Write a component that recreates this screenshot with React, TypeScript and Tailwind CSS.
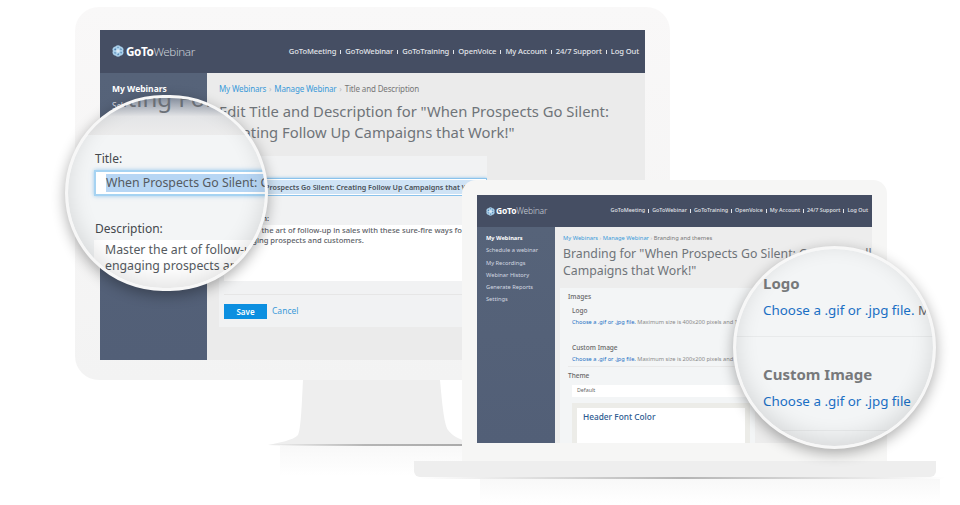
const sans = { fontFamily: '"Noto Sans", "Open Sans", sans-serif' };

const navLinks = ['GoToMeeting', 'GoToWebinar', 'GoToTraining', 'OpenVoice', 'My Account', '24/7 Support', 'Log Out'];
const laptopMenu = ['Schedule a webinar', 'My Recordings', 'Webinar History', 'Generate Reports', 'Settings'];

function LogoMark({ size }: { size: number }) {
  const lobes = [0, 60, 120, 180, 240, 300];
  return (
    <svg width={size} height={size} viewBox="0 0 24 24" className="shrink-0">
      {lobes.map((a) => (
        <g key={a} transform={`rotate(${a} 12 12)`}>
          <circle cx="12" cy="6" r="5.6" fill="#a9cfea" />
          <circle cx="12" cy="5.5" r="1.9" fill="#4f82b0" />
        </g>
      ))}
      <circle cx="12" cy="12" r="3.6" fill="#dbeaf6" />
    </svg>
  );
}

function Nav({ className, gap }: { className: string; gap: string }) {
  return (
    <div className={`flex items-center font-medium text-[#e2e5ea] ${className}`}>
      {navLinks.map((link, i) => (
        <span key={link} className="flex items-center">
          {i > 0 && <span className={`bg-[#e2e5ea] w-px h-[4px] ${gap}`} />}
          {link}
        </span>
      ))}
    </div>
  );
}

function Magnifier({ className, children }: { className: string; children: React.ReactNode }) {
  return (
    <div className={`absolute rounded-full overflow-hidden border-[3px] border-[#f7f7f7] bg-[#f3f5f6] shadow-[0_4px_14px_rgba(0,0,0,0.32)] ${className}`}>
      {children}
      <div className="absolute inset-0 rounded-full shadow-[inset_0_-6px_22px_rgba(0,0,0,0.12)]" />
    </div>
  );
}

function Monitor() {
  return (
    <div className="absolute left-[75px] top-[7px] w-[595px] h-[373px] rounded-[24px] bg-gradient-to-b from-[#f9f8f8] to-[#f3f3f3] pl-[25px] pt-[23px]">
      <div className="w-[545px] h-[330px] flex flex-col">
        <div className="h-[43px] bg-[#454e63] flex items-center justify-between pl-[12px] pr-[6px]">
          <div className="flex items-center gap-[2px]">
            <LogoMark size={12} />
            <span className="text-[11.7px] tracking-[-0.4px] font-bold text-white">GoTo<span className="font-light text-[#c9ced7]">Webinar</span></span>
          </div>
          <Nav className="text-[7.6px] tracking-[-0.1px] leading-none h-[10px]" gap="mx-[4px]" />
        </div>
        <div className="flex flex-1 min-h-0">
          <div className="w-[107px] shrink-0 bg-gradient-to-b from-[#566379] to-[#525f77] pl-[12px] pt-[10px] text-[8.5px] leading-[11px]">
            <div className="font-bold text-white">My Webinars</div>
            <div className="mt-[6px] text-[#d5dae2]">Schedule a webinar</div>
          </div>
          <div className="flex-1 min-w-0 bg-[#ebebeb] pl-[12px] pt-[10px]">
            <div className="text-[8px] leading-[11px] tracking-[-0.15px] text-[#3a9ad9]">
              My Webinars <span className="text-[#bbb] mx-[1px]">›</span> Manage Webinar <span className="text-[#bbb] mx-[1px]">›</span> <span className="text-[#777]">Title and Description</span>
            </div>
            <h1 className="mt-[7px] text-[14.8px] leading-[21px] font-normal text-[#6f7479] whitespace-nowrap">
              Edit Title and Description for "When Prospects Go Silent:
              <br />
              Creating Follow Up Campaigns that Work!"
            </h1>
            <div className="mt-[13px] w-[268px] h-[171px] bg-[#f1f2f3] pl-[5px]">
              <div className="pt-[22px] h-[40px] w-[263px] overflow-hidden">
                <div className="h-[18px] border border-[#8ac3ec] bg-[#cfe3f5] shadow-[0_0_3px_rgba(90,170,230,0.7),inset_0_0_0_1px_white] flex items-center pl-[18px] text-[7.2px] font-semibold text-[#4a5057] whitespace-nowrap overflow-hidden">
                  When Prospects Go Silent: Creating Follow Up Campaigns that Work!
                </div>
              </div>
              <div className="mt-[17px] text-[7.5px] leading-[10px] font-semibold text-[#555] pl-[1px]">Description:</div>
              <div className="mt-[2px] mr-[3px] h-[56px] bg-white pl-[10px] text-[7.6px] leading-[10px] font-medium text-[#5c6066] whitespace-nowrap">
                Master the art of follow-up in sales with these sure-fire ways for
                <br />
                engaging prospects and customers.
              </div>
              <div className="mt-[13px] border-t border-[#e6e6e6] pt-[9px] flex items-center gap-[5px]">
                <div className="w-[43px] h-[15px] bg-[#0c8fe0] text-white text-[8px] font-semibold flex items-center justify-center">Save</div>
                <span className="text-[8.5px] text-[#3a9ad9]">Cancel</span>
              </div>
            </div>
          </div>
        </div>
      </div>
    </div>
  );
}

function Laptop() {
  return (
    <div className="absolute left-[462px] top-[180px] w-[425px] h-[281px] rounded-t-[14px] bg-[#f6f6f5] pl-[15px] pt-[15px]">
      <div className="w-[395px] h-[248px] flex flex-col overflow-hidden">
        <div className="h-[32px] shrink-0 bg-[#454e63] flex items-center justify-between pl-[9px] pr-[4px]">
          <div className="flex items-center gap-[1px]">
            <LogoMark size={9} />
            <span className="text-[8.5px] tracking-[-0.2px] font-bold text-white">GoTo<span className="font-light text-[#c9ced7]">Webinar</span></span>
          </div>
          <Nav className="text-[5.4px] leading-none h-[8px]" gap="mx-[3px]" />
        </div>
        <div className="flex flex-1 min-h-0">
          <div className="w-[78px] shrink-0 bg-gradient-to-b from-[#566379] to-[#525f77] pl-[9px] pt-[5px] text-[5.7px] leading-[12.3px]">
            <div className="font-bold text-white">My Webinars</div>
            {laptopMenu.map((item) => (
              <div key={item} className="text-[#d3d8e0]">{item}</div>
            ))}
          </div>
          <div className="flex-1 min-w-0 bg-[#ededed] pl-[8px] pt-[7px]">
            <div className="text-[5.75px] leading-[9px] text-[#3a9ad9]">
              My Webinars <span className="text-[#bbb]">›</span> Manage Webinar <span className="text-[#bbb]">›</span> <span className="text-[#777]">Branding and themes</span>
            </div>
            <h2 className="mt-[2px] text-[12.3px] leading-[17px] font-normal text-[#6f7479] whitespace-nowrap">
              Branding for "When Prospects Go Silent: Creating Follow Up
              <br />
              Campaigns that Work!"
            </h2>
            <div className="mt-[9px] ml-[-3px] w-[195px] h-[155px] bg-[#f3f5f6] pl-[8px] pr-[5px] pt-[4px]">
              <div className="text-[6.5px] leading-[9px] font-medium text-[#666]">Images</div>
              <div className="pl-[4px]">
                <div className="mt-[5px] text-[6.5px] leading-[9px] font-medium text-[#666]">Logo</div>
                <div className="mt-[3px] text-[5.65px] leading-[8px] text-[#888] whitespace-nowrap">
                  <span className="text-[#1a6fc4]">Choose a .gif or .jpg file.</span> Maximum size is 400x200 pixels and 100KB
                </div>
                <div className="mt-[17px] text-[6.5px] leading-[9px] font-medium text-[#666]">Custom Image</div>
                <div className="mt-[3px] text-[5.65px] leading-[8px] text-[#888] whitespace-nowrap">
                  <span className="text-[#1a6fc4]">Choose a .gif or .jpg file.</span> Maximum size is 200x200 pixels and 100KB
                </div>
              </div>
              <div className="mt-[3px] border-t border-[#e9e9e9] pt-[4px] text-[6.5px] leading-[9px] font-medium text-[#666]">Theme</div>
              <div className="mt-[5px] ml-[4px] h-[12px] bg-white flex items-center pl-[5px] text-[5.3px] text-[#666]">Default</div>
              <div className="mt-[6px] ml-[4px] border-[5px] border-[#ecece8] bg-white h-[60px] pl-[6px] pt-[3px] text-[8.3px] leading-[12px] font-medium text-[#2d5a90]">Header Font Color</div>
            </div>
          </div>
        </div>
      </div>
    </div>
  );
}

export default function App() {
  return (
    <div className="relative w-[960px] h-[505px] overflow-hidden bg-white" style={sans}>
      {/* monitor stand */}
      <svg className="absolute left-[260px] top-[380px]" width="210" height="70" viewBox="0 0 210 70">
        <path d="M43 0H180C182 22 184 44 188 50C191 54 196 58 205 61V65H8C18 63 34 60 38 55C41 50 42 20 43 0Z" fill="#eeeeee" />
      </svg>
      <div className="absolute left-[268px] top-[444px] w-[195px] h-[2px] bg-gradient-to-r from-transparent via-[#b5b5b5] to-[#aaaaaa]" />
      <div className="absolute left-[280px] top-[446px] w-[190px] h-[30px] bg-gradient-to-b from-[#f8f8f8] to-white" />

      <Monitor />
      <Laptop />

      {/* laptop base */}
      <div className="absolute left-[414px] top-[461px] w-[522px] h-[16px] rounded-b-[6px] bg-[#eeeeee]" />
      <div className="absolute left-[420px] top-[477px] w-[525px] h-[2px] bg-gradient-to-r from-transparent via-[#b4b4b4] to-transparent" />
      <div className="absolute left-[480px] top-[479px] w-[460px] h-[24px] bg-gradient-to-b from-[#f8f8f8] to-white" />

      <Magnifier className="left-[65px] top-[95px] w-[203px] h-[196px]">
        <div className="h-[37px] bg-gradient-to-b from-[#8b94a3] via-[#e4e5e7] to-[#ececec] overflow-hidden pl-[8px] whitespace-nowrap">
          <div className="-mt-[12px] text-[24px] leading-[24px] text-[#6c7178]">Creating Follow Up</div>
        </div>
        <div className="pl-[27px] pt-[17px]">
          <div className="text-[12px] leading-[14px] text-[#44484d]">Title:</div>
          <div className="mt-[4px] h-[26px] -ml-[1px] w-[240px] border-2 border-[#a6d3f2] bg-white shadow-[0_0_4px_rgba(90,170,230,0.6)] flex items-center pl-[10px] text-[12.3px] text-[#555a60] whitespace-nowrap overflow-hidden">
            <span className="bg-[#b7d6f4]">When Prospects Go Silent: Creating Follow Up</span>
          </div>
          <div className="mt-[26px] text-[12px] leading-[14px] text-[#44484d]">Description:</div>
          <div className="mt-[4px] -ml-[1px] w-[240px] h-[60px] bg-white pl-[11px] pt-[2px] text-[12.3px] leading-[16px] text-[#555a60] whitespace-nowrap">
            Master the art of follow-up in sales
            <br />
            engaging prospects and customers.
          </div>
        </div>
      </Magnifier>

      <Magnifier className="left-[733px] top-[246px] w-[203px] h-[203px]">
        <div className="pl-[27px] pt-[30px] whitespace-nowrap">
          <div className="h-[15px] overflow-hidden">
            <div className="-mt-[7px] text-[15px] leading-[22px] font-bold text-[#77797b]">Logo</div>
          </div>
          <div className="mt-[6px] text-[13.4px] leading-[20px] text-[#1a6fc4]">Choose a .gif or .jpg file. <span className="text-[#666]">Maximum</span></div>
          <div className="mt-[16px] -ml-[27px] border-t border-[#e8eaeb]" />
          <div className="mt-[26px] text-[15px] leading-[22px] font-bold text-[#77797b]">Custom Image</div>
          <div className="mt-[6px] text-[13.4px] leading-[20px] text-[#1a6fc4]">Choose a .gif or .jpg file</div>
          <div className="mt-[19px] -ml-[27px] border-t border-[#e8eaeb]" />
        </div>
      </Magnifier>
    </div>
  );
}
